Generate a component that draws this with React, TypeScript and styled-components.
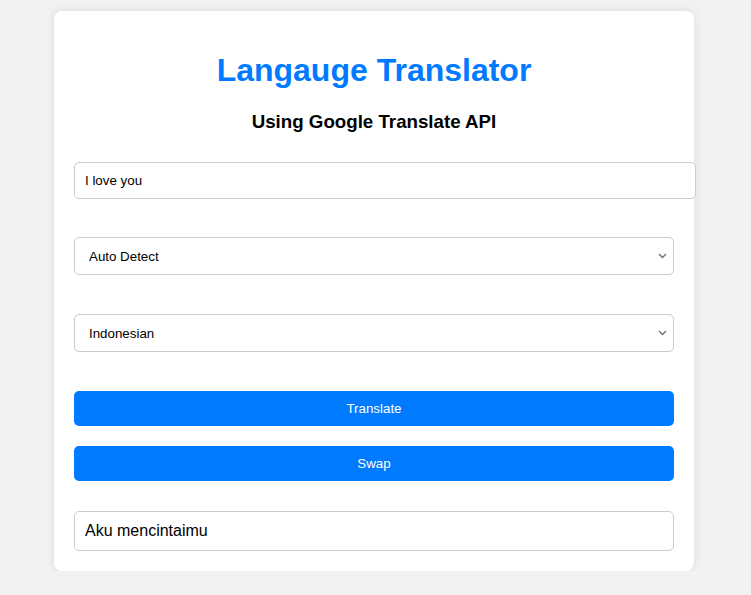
import React, { useState } from 'react'
import styled, { createGlobalStyle } from 'styled-components'

const GlobalStyle = createGlobalStyle`
    body {
        margin: 0;
        background: #f2f2f2;
        font-family: "Liberation Sans", Arial, sans-serif;
    }
`

// small grey chevron like chrome's default select arrow
const chevron =
    "data:image/svg+xml;utf8,<svg xmlns='http://www.w3.org/2000/svg' width='9' height='6' viewBox='0 0 9 6'><path d='M1 1l3.5 3.5L8 1' fill='none' stroke='%23707070' stroke-width='1.4'/></svg>"

const App = () => {
    const [text, setText] = useState('I love you')
    const [from, setFrom] = useState('auto')
    const [to, setTo] = useState('id')

    return (
        <>
            <GlobalStyle />
            <Card>
                <Title>Langauge Translator</Title>
                <Subtitle>Using Google Translate API</Subtitle>
                <TextInput
                    type='text'
                    value={text}
                    onChange={(e) => setText(e.target.value)}
                />
                <Select value={from} onChange={(e) => setFrom(e.target.value)}>
                    <option value='auto'>Auto Detect</option>
                    <option value='en'>English</option>
                    <option value='id'>Indonesian</option>
                </Select>
                <Select value={to} onChange={(e) => setTo(e.target.value)}>
                    <option value='en'>English</option>
                    <option value='id'>Indonesian</option>
                </Select>
                <Button>Translate</Button>
                <Button $last>Swap</Button>
                <Output>Aku mencintaimu</Output>
            </Card>
        </>
    )
}

const Card = styled.div`
    width: 600px;
    margin: 11px 0 0 54px;
    padding: 20px;
    background: #fff;
    border-radius: 8px;
    box-shadow: 0 0 10px rgba(0, 0, 0, 0.1);
`

const Title = styled.h1`
    margin: 21px 0;
    color: #007bff;
    font-size: 32px;
    text-align: center;
`

const Subtitle = styled.h3`
    margin: 22px 0 29px;
    font-size: 18.72px;
    text-align: center;
`

const TextInput = styled.input`
    display: block;
    width: 100%;
    margin: 0 0 38px;
    padding: 10px;
    border: 1px solid #ccc;
    border-radius: 5px;
    font-family: "Liberation Sans", Arial, sans-serif;
    font-size: 13.33px;
    outline: none;
`

const Select = styled.select`
    display: block;
    width: 100%;
    height: 38px;
    margin: 0 0 39px;
    padding: 10px 10px 10px 14px;
    border: 1px solid #ccc;
    border-radius: 5px;
    appearance: none;
    background: #fff url("${chevron}") no-repeat right 6px center;
    color: #000;
    font-family: "Liberation Sans", Arial, sans-serif;
    font-size: 13.33px;
`

const Button = styled.button<{ $last?: boolean }>`
    display: block;
    width: 100%;
    height: 35px;
    margin: 0 0 ${(p) => (p.$last ? '30px' : '20px')};
    padding: 10px;
    border: none;
    border-radius: 5px;
    background: #007bff;
    color: #fff;
    font-family: "Liberation Sans", Arial, sans-serif;
    font-size: 13.33px;
    cursor: pointer;
`

const Output = styled.div`
    padding: 10px;
    border: 1px solid #ccc;
    border-radius: 5px;
    font-size: 16px;
    line-height: 18px;
`

export default App
